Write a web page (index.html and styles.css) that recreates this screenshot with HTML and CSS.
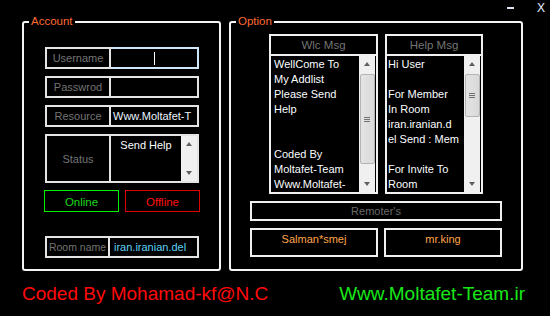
FILE: index.html
```html
<!doctype html>
<html>
<head>
<meta charset="utf-8">
<title>Moltafet Addlist</title>
<link rel="stylesheet" href="styles.css">
</head>
<body>
<div class="window">
    <div class="titlebar"><span class="min"></span><span class="close">X</span></div>

    <div class="panels">
        <fieldset class="group account">
            <legend>Account</legend>
            <div class="group-body">
                <div class="field">
                    <div class="label">Username</div>
                    <div class="value focused"><span class="caret"></span></div>
                </div>
                <div class="field">
                    <div class="label">Passwrod</div>
                    <div class="value"></div>
                </div>
                <div class="field">
                    <div class="label">Resource</div>
                    <div class="value">Www.Moltafet-T</div>
                </div>
                <div class="field status">
                    <div class="label">Status</div>
                    <div class="value memo">
                        <div class="memo-text centered">Send Help</div>
                        <div class="sb">
                            <div class="sb-up"></div>
                            <div class="sb-fill"></div>
                            <div class="sb-down"></div>
                        </div>
                    </div>
                </div>
                <div class="states">
                    <div class="state online">Online</div>
                    <div class="state offline">Offline</div>
                </div>
                <div class="field room">
                    <div class="label">Room name</div>
                    <div class="value cyan">iran.iranian.del</div>
                </div>
            </div>
        </fieldset>

        <fieldset class="group option">
            <legend>Option</legend>
            <div class="group-body">
                <div class="msgs">
                    <div class="msg wlc">
                        <div class="msg-head">Wlc Msg</div>
                        <div class="msg-box">
                            <div class="memo-text">WellCome To
My Addlist
Please Send
Help


Coded By
Moltafet-Team
Www.Moltafet-</div>
                            <div class="sb">
                                <div class="sb-up"></div>
                                <div class="thumb thumb-long"></div>
                                <div class="sb-fill"></div>
                                <div class="sb-down"></div>
                            </div>
                        </div>
                    </div>
                    <div class="msg help">
                        <div class="msg-head">Help Msg</div>
                        <div class="msg-box">
                            <div class="memo-text">Hi User

For Member
In Room
iran.iranian.d
el Send : Mem

For Invite To
Room</div>
                            <div class="sb">
                                <div class="sb-up"></div>
                                <div class="thumb thumb-short"></div>
                                <div class="sb-fill"></div>
                                <div class="sb-down"></div>
                            </div>
                        </div>
                    </div>
                </div>
                <div class="remoters">Remoter's</div>
                <div class="remoter-list">
                    <div class="remoter">Salman*smej</div>
                    <div class="remoter narrow">mr.king</div>
                </div>
            </div>
        </fieldset>
    </div>

    <div class="footer">
        <span class="coded">Coded By Mohamad-kf@N.C</span>
        <span class="site">Www.Moltafet-Team.ir</span>
    </div>
</div>
</body>
</html>
```

FILE: styles.css
```css
body {
    margin: 0;
    background: #000;
    font-family: "Liberation Sans", Arial, sans-serif;
    font-size: 11px;
    color: #fff;
}
.window {
    width: 550px;
    height: 316px;
    overflow: hidden;
}

/* title bar buttons */
.titlebar {
    height: 15px;
    display: flex;
    justify-content: flex-end;
    align-items: flex-start;
    padding-right: 5px;
}
.min {
    width: 7px;
    height: 2px;
    background: #dfe8f6;
    margin: 7px 23px 0 0;
}
.close {
    font-size: 12px;
    line-height: 12px;
    margin-top: 2px;
    color: #e8f0ff;
}

/* group boxes */
.panels {
    display: flex;
    gap: 8px;
    padding-left: 22px;
}
.group {
    box-sizing: border-box;
    margin: 0;
    padding: 0;
    height: 256px;
    border: 2px solid #f4f4f4;
    border-radius: 3px;
}
.group legend {
    margin-left: 5px;
    padding: 0 2px;
    line-height: 13px;
    font-size: 11.5px;
    color: #ff6a33;
}
.account {
    width: 199px;
}
.option {
    width: 294px;
}
.account .group-body {
    padding: 19px 0 0 21px;
}
.option .group-body {
    padding: 6px 0 0 19px;
}

/* account fields */
.field {
    display: flex;
    height: 22px;
    margin-bottom: 7px;
}
.label {
    box-sizing: border-box;
    width: 66px;
    border: 2px solid #e4e4e4;
    color: #747474;
    display: flex;
    align-items: center;
    justify-content: center;
}
.value {
    box-sizing: border-box;
    width: 88px;
    border: 2px solid #e4e4e4;
    border-left: none;
    color: #eaf4ff;
    padding-left: 2px;
    display: flex;
    align-items: center;
    white-space: nowrap;
    overflow: hidden;
}
.value.focused {
    border-color: #cfe6fb;
    justify-content: center;
    padding-left: 0;
}
.caret {
    width: 1px;
    height: 13px;
    background: #fff;
}
.field.status {
    height: 49px;
}
.value.memo {
    align-items: stretch;
    padding-left: 0;
}
.field.room {
    margin-top: 24px;
}
.room .label {
    width: 65px;
    font-size: 10.5px;
}
.room .value {
    width: 89px;
    color: #5fd0f4;
    padding-left: 4px;
}

.states {
    display: flex;
    gap: 6px;
    height: 22px;
    margin-left: -1px;
}
.state {
    box-sizing: border-box;
    width: 75px;
    display: flex;
    align-items: center;
    justify-content: center;
    font-size: 11.5px;
    padding-top: 2px;
}
.online {
    border: 1px solid #00f000;
    color: #1ad81a;
}
.offline {
    border: 1px solid #e00000;
    color: #ff1010;
}

/* memo boxes */
.memo-text {
    flex: 1;
    white-space: pre;
    overflow: hidden;
    line-height: 15px;
    padding: 1px 0 0 3px;
    color: #fbfdff;
}
.memo-text.centered {
    text-align: center;
    padding: 2px 0 0;
}
.sb {
    width: 16px;
    background: #f0f0f0;
    display: flex;
    flex-direction: column;
    align-items: center;
}
.sb-up,
.sb-down {
    height: 16px;
    width: 16px;
    position: relative;
}
.sb-up::after,
.sb-down::after {
    content: "";
    position: absolute;
    left: 5px;
    top: 6px;
    border-left: 3px solid transparent;
    border-right: 3px solid transparent;
}
.sb-up::after {
    border-bottom: 4px solid #606060;
}
.sb-down::after {
    border-top: 4px solid #606060;
}
.sb-fill {
    flex: 1;
}
.thumb {
    box-sizing: border-box;
    width: 15px;
    margin-top: 2px;
    background: linear-gradient(to right, #e4e4e4, #d8d8d8);
    border: 1px solid #b4b4b4;
    border-radius: 2px;
    display: flex;
    align-items: center;
    justify-content: center;
}
.thumb::after {
    content: "";
    width: 6px;
    height: 5px;
    background: repeating-linear-gradient(to bottom, #707070 0, #707070 1px, transparent 1px, transparent 2px);
}
.thumb-long {
    height: 90px;
}
.thumb-short {
    height: 43px;
}

/* option side */
.msgs {
    display: flex;
    gap: 7px;
    margin-left: 19px;
}
.msg-head {
    box-sizing: border-box;
    height: 22px;
    border: 2px solid #f0f0f0;
    color: #747474;
    font-size: 11.5px;
    display: flex;
    align-items: center;
    justify-content: center;
}
.msg-box {
    box-sizing: border-box;
    height: 138px;
    border: 2px solid #f0f0f0;
    border-top: none;
    display: flex;
    padding-right: 1px;
}
.wlc {
    width: 109px;
}
.help {
    width: 98px;
}
.help .memo-text {
    padding-left: 1px;
}
.remoters {
    box-sizing: border-box;
    width: 252px;
    height: 20px;
    margin-top: 7px;
    border: 2px solid #f0f0f0;
    color: #6a6a6a;
    display: flex;
    align-items: center;
    justify-content: center;
}
.remoter-list {
    display: flex;
    gap: 6px;
    margin-top: 7px;
}
.remoter {
    box-sizing: border-box;
    width: 128px;
    height: 29px;
    border: 2px solid #f0f0f0;
    color: #ffa54a;
    text-align: center;
    line-height: 15px;
    padding-top: 2px;
}
.remoter.narrow {
    width: 118px;
}

/* footer */
.footer {
    display: flex;
    justify-content: space-between;
    margin-top: 12px;
    padding: 0 25px 0 22px;
    font-size: 19px;
    line-height: 22px;
}
.coded {
    color: #ff0a0a;
}
.site {
    color: #18e818;
}
```
